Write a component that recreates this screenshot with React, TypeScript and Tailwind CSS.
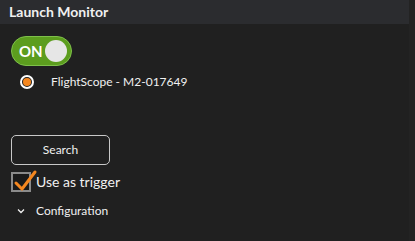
import React from 'react';

export default function App() {
  return (
    <div
      className="flex w-[415px] h-[241px] bg-[#202020] text-[#f0f0f0] overflow-hidden"
      style={{ fontFamily: 'Lato, "Noto Sans", sans-serif' }}
    >
      <div className="flex flex-col w-[409px]">
        {/* header */}
        <div className="h-6 bg-[#2b2c2f] flex items-center pl-[9px] text-[14px] font-bold leading-none">
          Launch Monitor
        </div>

        <div className="flex flex-col pl-[11px]">
          {/* toggle */}
          <div className="mt-3 flex items-center w-[61px] h-[30px] rounded-full bg-[#5c9d1e] border border-[#7ec04a] pl-[7px] pr-[4px] justify-between">
            <span className="text-[15px] font-bold text-white leading-none">ON</span>
            <span className="w-[22px] h-[22px] rounded-full bg-[#e6e6e6]" />
          </div>

          {/* radio */}
          <div className="mt-[9px] flex items-center pl-[9px] h-[14px]">
            <span className="shrink-0 flex items-center justify-center w-[14px] h-[14px] rounded-full border-2 border-white bg-[#202020]">
              <span className="w-[8px] h-[8px] rounded-full bg-[#f5871f]" />
            </span>
            <span className="ml-[17px] text-[12px] leading-none">FlightScope - M2-017649</span>
          </div>

          {/* search */}
          <button className="mt-[46px] w-[99px] h-[30px] rounded-[5px] border border-[#c8c8c8] text-[12px] text-[#f0f0f0]">
            Search
          </button>

          {/* checkbox */}
          <div className="mt-[7px] flex items-center">
            <span className="relative shrink-0 w-5 h-5 border-2 border-[#8a8a8a] bg-[#1a1a1a]">
              <svg className="absolute -left-[1px] -top-[6px]" width="26" height="26" viewBox="0 0 26 26" fill="none">
                <path d="M4 15 L10 21 L23 4" stroke="#f5871f" strokeWidth="3" strokeLinecap="round" strokeLinejoin="round" />
              </svg>
            </span>
            <span className="ml-[5px] text-[14px] leading-none">Use as trigger</span>
          </div>

          {/* configuration */}
          <div className="mt-[13px] flex items-center">
            <svg className="ml-[6px]" width="8" height="6" viewBox="0 0 8 6" fill="none">
              <path d="M1 1.5 L4 4.5 L7 1.5" stroke="#f0f0f0" strokeWidth="1.3" />
            </svg>
            <span className="ml-[11px] text-[12px] leading-none">Configuration</span>
          </div>
        </div>
      </div>
      <div className="flex-1 bg-[#232323]" />
    </div>
  );
}
